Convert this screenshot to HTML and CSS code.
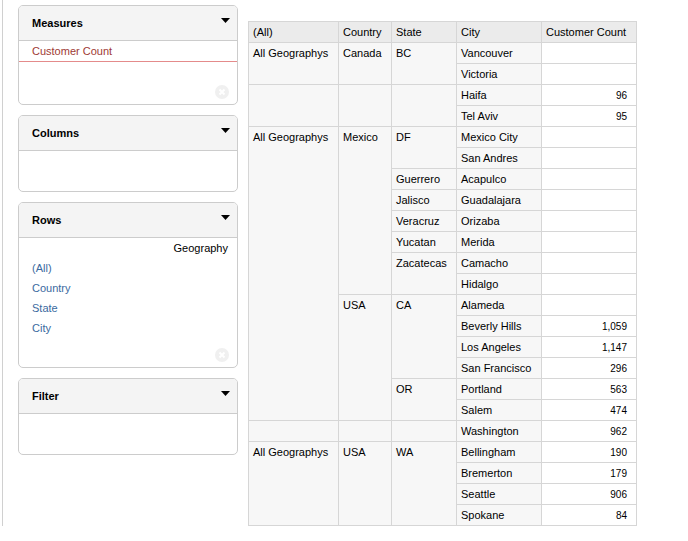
FILE: index.html
```html
<!DOCTYPE html>
<html>
<head>
    <title>Pivot Table</title>
    <link rel="stylesheet" href="styles.css">
</head>
<body>

<div class="layout">
    <div class="sidebar">

        <div class="panel">
            <div class="panel-head">
                <span>Measures</span>
                <svg class="caret" width="9" height="5" viewBox="0 0 9 5"><polygon points="0,0 9,0 4.5,5" fill="#000"/></svg>
            </div>
            <div class="panel-body measures-body">
                <div class="measure">Customer Count</div>
                <svg class="clear" width="14" height="14" viewBox="0 0 14 14">
                    <circle cx="7" cy="7" r="7" fill="#f0f0f0"/>
                    <path d="M4.5 4.5 L9.5 9.5 M9.5 4.5 L4.5 9.5" stroke="#fff" stroke-width="2"/>
                </svg>
            </div>
        </div>

        <div class="panel">
            <div class="panel-head">
                <span>Columns</span>
                <svg class="caret" width="9" height="5" viewBox="0 0 9 5"><polygon points="0,0 9,0 4.5,5" fill="#000"/></svg>
            </div>
            <div class="panel-body"></div>
        </div>

        <div class="panel">
            <div class="panel-head">
                <span>Rows</span>
                <svg class="caret" width="9" height="5" viewBox="0 0 9 5"><polygon points="0,0 9,0 4.5,5" fill="#000"/></svg>
            </div>
            <div class="panel-body rows-body">
                <div class="dim-name">Geography</div>
                <ul class="levels">
                    <li>(All)</li>
                    <li>Country</li>
                    <li>State</li>
                    <li>City</li>
                </ul>
                <svg class="clear" width="14" height="14" viewBox="0 0 14 14">
                    <circle cx="7" cy="7" r="7" fill="#f0f0f0"/>
                    <path d="M4.5 4.5 L9.5 9.5 M9.5 4.5 L4.5 9.5" stroke="#fff" stroke-width="2"/>
                </svg>
            </div>
        </div>

        <div class="panel">
            <div class="panel-head">
                <span>Filter</span>
                <svg class="caret" width="9" height="5" viewBox="0 0 9 5"><polygon points="0,0 9,0 4.5,5" fill="#000"/></svg>
            </div>
            <div class="panel-body"></div>
        </div>

    </div>

    <table class="pivot">
        <colgroup>
            <col class="c-all"><col class="c-country"><col class="c-state"><col class="c-city"><col class="c-count">
        </colgroup>
        <thead>
            <tr><th>(All)</th><th>Country</th><th>State</th><th>City</th><th>Customer Count</th></tr>
        </thead>
        <tbody>
            <tr><th rowspan="2">All Geographys</th><th rowspan="2">Canada</th><th rowspan="2">BC</th><th>Vancouver</th><td></td></tr>
            <tr><th>Victoria</th><td></td></tr>
            <tr><th rowspan="2"></th><th rowspan="2"></th><th rowspan="2"></th><th>Haifa</th><td>96</td></tr>
            <tr><th>Tel Aviv</th><td>95</td></tr>
            <tr><th rowspan="14">All Geographys</th><th rowspan="8">Mexico</th><th rowspan="2">DF</th><th>Mexico City</th><td></td></tr>
            <tr><th>San Andres</th><td></td></tr>
            <tr><th>Guerrero</th><th>Acapulco</th><td></td></tr>
            <tr><th>Jalisco</th><th>Guadalajara</th><td></td></tr>
            <tr><th>Veracruz</th><th>Orizaba</th><td></td></tr>
            <tr><th>Yucatan</th><th>Merida</th><td></td></tr>
            <tr><th rowspan="2">Zacatecas</th><th>Camacho</th><td></td></tr>
            <tr><th>Hidalgo</th><td></td></tr>
            <tr><th rowspan="6">USA</th><th rowspan="4">CA</th><th>Alameda</th><td></td></tr>
            <tr><th>Beverly Hills</th><td>1,059</td></tr>
            <tr><th>Los Angeles</th><td>1,147</td></tr>
            <tr><th>San Francisco</th><td>296</td></tr>
            <tr><th rowspan="2">OR</th><th>Portland</th><td>563</td></tr>
            <tr><th>Salem</th><td>474</td></tr>
            <tr><th></th><th></th><th></th><th>Washington</th><td>962</td></tr>
            <tr><th rowspan="4">All Geographys</th><th rowspan="4">USA</th><th rowspan="4">WA</th><th>Bellingham</th><td>190</td></tr>
            <tr><th>Bremerton</th><td>179</td></tr>
            <tr><th>Seattle</th><td>906</td></tr>
            <tr><th>Spokane</th><td>84</td></tr>
        </tbody>
    </table>
</div>

</body>
</html>
```

FILE: styles.css
```css
body {
    margin: 0;
    font-family: "Liberation Sans", Arial, sans-serif;
    font-size: 11px;
    color: #000;
    background: #fff;
}
.layout {
    display: flex;
    align-items: flex-start;
}
.sidebar {
    margin-left: 2px;
    border-left: 1px solid #d0d0d0;
    padding: 5px 10px 0 15px;
    height: 526px;
    box-sizing: border-box;
    display: flex;
    flex-direction: column;
    gap: 10px;
}
.panel {
    width: 220px;
    box-sizing: border-box;
    border: 1px solid #cccccc;
    border-radius: 5px;
    overflow: hidden;
}
.panel-head {
    height: 34px;
    background: #f4f4f4;
    border-bottom: 1px solid #cccccc;
    display: flex;
    align-items: center;
    justify-content: space-between;
    padding: 0 7px 0 13px;
    font-weight: bold;
}
.panel-head .caret {
    align-self: flex-start;
    margin-top: 12px;
}
.panel-body {
    height: 40px;
    position: relative;
}
.measures-body {
    height: 63px;
}
.measure {
    height: 20px;
    line-height: 20px;
    padding-left: 13px;
    color: #9e3a34;
    border-bottom: 1px solid #e48b8b;
}
.rows-body {
    height: 129px;
}
.dim-name {
    text-align: right;
    padding: 4px 9px 0 0;
    line-height: 13px;
}
.levels {
    list-style: none;
    margin: 0;
    padding: 3px 0 0 13px;
}
.levels li {
    line-height: 20px;
    color: #3b6aa0;
}
.clear {
    position: absolute;
    right: 8px;
    bottom: 5px;
}
.pivot {
    margin-top: 21px;
    border-collapse: collapse;
    table-layout: fixed;
    width: 388px;
}
.c-all { width: 90px; }
.c-country { width: 53px; }
.c-state { width: 65px; }
.c-city { width: 85px; }
.c-count { width: 95px; }
.pivot th, .pivot td {
    border: 1px solid #d6d6d6;
    padding: 4px 4px 3px;
    line-height: 13px;
    height: 13px;
    text-align: left;
    vertical-align: top;
    font-weight: normal;
    white-space: nowrap;
}
.pivot thead th {
    background: #ebebeb;
}
.pivot tbody th {
    background: #f7f7f7;
}
.pivot td {
    background: #fff;
    text-align: right;
    font-size: 10px;
    padding-right: 9px;
}
```
